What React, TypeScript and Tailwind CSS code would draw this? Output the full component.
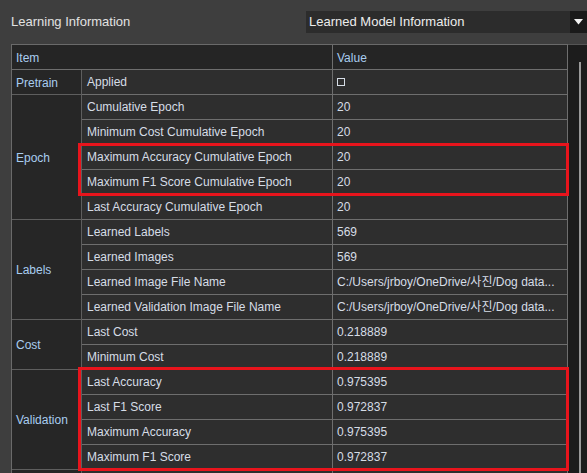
import React from 'react';

type Row = { item: string; value: React.ReactNode };
type Group = { name: string; rows: Row[] };

const PATH = 'C:/Users/jrboy/OneDrive/사진/Dog data...';

const groups: Group[] = [
    { name: 'Pretrain', rows: [{ item: 'Applied', value: <span className="inline-block align-middle w-[8px] h-[8px] border border-[#d6dde6] -mt-[2px]" /> }] },
    {
        name: 'Epoch',
        rows: [
            { item: 'Cumulative Epoch', value: '20' },
            { item: 'Minimum Cost Cumulative Epoch', value: '20' },
            { item: 'Maximum Accuracy Cumulative Epoch', value: '20' },
            { item: 'Maximum F1 Score Cumulative Epoch', value: '20' },
            { item: 'Last Accuracy Cumulative Epoch', value: '20' },
        ],
    },
    {
        name: 'Labels',
        rows: [
            { item: 'Learned Labels', value: '569' },
            { item: 'Learned Images', value: '569' },
            { item: 'Learned Image File Name', value: PATH },
            { item: 'Learned Validation Image File Name', value: PATH },
        ],
    },
    {
        name: 'Cost',
        rows: [
            { item: 'Last Cost', value: '0.218889' },
            { item: 'Minimum Cost', value: '0.218889' },
        ],
    },
    {
        name: 'Validation',
        rows: [
            { item: 'Last Accuracy', value: '0.975395' },
            { item: 'Last F1 Score', value: '0.972837' },
            { item: 'Maximum Accuracy', value: '0.975395' },
            { item: 'Maximum F1 Score', value: '0.972837' },
        ],
    },
    { name: '', rows: [{ item: '', value: '' }, { item: '', value: '' }] },
];

const font = { fontFamily: '"Liberation Sans", "Noto Sans CJK KR", sans-serif' };

const App = () => {
    let rowIndex = 2;

    return (
        <div className="relative w-[587px] h-[473px] overflow-hidden bg-[#3e3e3e] text-[12px]" style={font}>
            {/* top bar */}
            <div className="flex items-start h-[44px]">
                <div className="pl-[11px] pt-[14px] text-[13px] leading-[16px] text-[#e2e2e2]">Learning Information</div>
                <div className="ml-auto mt-[11px] w-[281px] h-[22px] flex bg-[#2c2c2c]">
                    <div className="flex-1 pl-[3px] text-[13px] leading-[21px] text-[#ececec]">Learned Model Information</div>
                    <div className="w-[17px] h-full bg-[#1a1a1a] flex items-center justify-center">
                        <svg width="9" height="6" viewBox="0 0 9 6">
                            <path d="M0 0h9L4.5 5.5z" fill="#f2f2f2" />
                        </svg>
                    </div>
                </div>
            </div>

            <div className="flex">
                <div className="w-[11px] shrink-0" />
                <div className="border-l border-t border-[#6a6a6a]">
                    <div className="grid grid-cols-[70px_251px_235px] auto-rows-[25px]">
                        <div className="col-span-2 border-b border-r border-[#6e6e6e] bg-[#252525] pl-[4px] pt-[1px] leading-[24px] text-[#a9cdf0]">Item</div>
                        <div className="border-b border-r border-[#6e6e6e] bg-[#252525] pl-[4px] pt-[1px] leading-[24px] text-[#a9cdf0]">Value</div>

                        {groups.map((g, gi) => {
                            const start = rowIndex;
                            rowIndex += g.rows.length;
                            return (
                                <React.Fragment key={gi}>
                                    <div
                                        className="border-b border-r border-[#5e5e5e] bg-[#262626] pl-[4px] pt-[1px] flex items-center text-[#a9cdf0]"
                                        style={{ gridColumn: 1, gridRow: `${start} / span ${g.rows.length}` }}
                                    >
                                        {g.name}
                                    </div>
                                    {g.rows.map((r, ri) => (
                                        <React.Fragment key={ri}>
                                            <div
                                                className="border-b border-r border-[#6e6e6e] bg-[#2e2e2e] pl-[5px] pt-[1px] leading-[23px] text-[#d6dde6] whitespace-nowrap overflow-hidden"
                                                style={{ gridColumn: 2, gridRow: start + ri }}
                                            >
                                                {r.item}
                                            </div>
                                            <div
                                                className="border-b border-r border-[#6e6e6e] bg-[#2e2e2e] pl-[4px] pt-[1px] leading-[23px] text-[#d6dde6] whitespace-nowrap overflow-hidden"
                                                style={{ gridColumn: 3, gridRow: start + ri }}
                                            >
                                                {r.value}
                                            </div>
                                        </React.Fragment>
                                    ))}
                                </React.Fragment>
                            );
                        })}
                    </div>
                </div>
                {/* scrollbar */}
                <div className="flex-1 bg-[#1c1c1c] border-t border-[#555555] flex">
                    <div className="ml-[11px] mt-[17px] w-[2px] h-[420px] bg-[#9a9a9a]" />
                </div>
            </div>

            {/* highlight boxes */}
            <div className="absolute left-[78px] top-[143px] w-[491px] h-[53px] border-[3px] border-[#e8141c]" />
            <div className="absolute left-[78px] top-[367px] w-[491px] h-[104px] border-[3px] border-[#e8141c]" />
        </div>
    );
};

export default App;
